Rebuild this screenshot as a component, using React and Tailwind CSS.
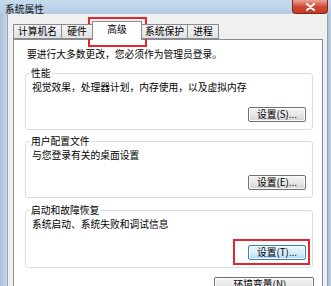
import React from 'react';

const Btn = ({ children, focus, className = '' }) => (
  <div
    className={
      'h-[15px] flex items-center justify-center rounded-[2px] border text-[9.75px] leading-none text-black ' +
      (focus
        ? 'border-[#3c7fb1] bg-linear-to-b from-[#eaf6fd] via-[#d9effc] to-[#a9dbf6] shadow-[inset_0_0_0_1px_#f4fbff] '
        : 'border-[#707070] bg-linear-to-b from-[#f4f4f4] via-[#e8e8e8] to-[#d2d2d2] shadow-[inset_0_0_0_1px_#fcfcfc] ') +
      className
    }
  >
    {children}
  </div>
);

const Group = ({ label, text, button, focus, h = 'h-[57px]', className = '' }) => (
  <div className={'relative ml-[11px] w-[288px] rounded-[3px] border border-[#d5dfe5] flex flex-col ' + h + ' ' + className}>
    <span className="absolute left-[4px] -top-[6px] bg-white px-[1px] leading-[10px]">{label}</span>
    <p className="mt-[8px] ml-[6px] leading-[10px]">{text}</p>
    <Btn focus={focus} className="mt-auto mb-[7px] mr-[6px] self-end w-[58px]">
      {button}
    </Btn>
  </div>
);

const Tab = ({ children, w }) => (
  <div
    className={
      'h-[15px] flex items-center justify-center border border-r-0 border-[#898c95] bg-linear-to-b from-[#f3f3f3] to-[#e2e2e2] leading-none ' +
      w
    }
  >
    {children}
  </div>
);

export default function App() {
  return (
    <div className="relative w-[331px] h-[286px] overflow-hidden flex flex-col bg-[#bcd2e8] font-['Noto_Sans_CJK_SC',sans-serif] text-[9.75px] text-black">
      {/* title bar */}
      <div className="h-[17px] flex items-start justify-between bg-linear-to-b from-[#c7dbee] to-[#b3cbe3]">
        <span className="ml-[5px] mt-[4px] leading-[10px] text-[#111]">系统属性</span>
        <div className="mr-[3px] w-[36px] h-[14px] rounded-b-[4px] border border-t-0 border-[#7b2a1e] bg-linear-to-b from-[#e9a495] via-[#cf4b33] to-[#c23a20] flex items-center justify-center">
          <svg width="9" height="8" viewBox="0 0 9 8">
            <path d="M1 1 L8 7 M8 1 L1 7" stroke="#fff" strokeWidth="2" strokeLinecap="round" />
          </svg>
        </div>
      </div>

      <div className="flex-1 flex">
        <div className="w-[8px] bg-linear-to-r from-[#a9c0d8] to-[#c4d6e8] border-r border-[#8ea3b8]" />
        <div className="flex-1 bg-[#f0f0f0] pl-[5px] pr-[4px] flex flex-col">
          {/* tabs */}
          <div className="h-[25px] flex items-end relative z-10">
            <Tab w="w-[48px]">计算机名</Tab>
            <Tab w="w-[31px]">硬件</Tab>
            <div className="h-[19px] w-[50px] -mb-px border border-b-0 border-[#898c95] bg-white flex items-center justify-center leading-none pb-[2px]">
              高级
            </div>
            <Tab w="w-[45px] border-l-0">系统保护</Tab>
            <div className="h-[15px] w-[32px] flex items-center justify-center border border-[#898c95] bg-linear-to-b from-[#f3f3f3] to-[#e2e2e2] leading-none">
              进程
            </div>
          </div>

          {/* panel */}
          <div className="flex-1 border border-[#898c95] bg-white">
            <p className="mt-[9px] ml-[13px] leading-[10px]">要进行大多数更改，您必须作为管理员登录。</p>
            <Group
              className="mt-[14px]"
              label="性能"
              text="视觉效果，处理器计划，内存使用，以及虚拟内存"
              button="设置(S)..."
            />
            <Group
              className="mt-[11px]"
              label="用户配置文件"
              text="与您登录有关的桌面设置"
              button="设置(E)..."
            />
            <Group
              className="mt-[12px]"
              h="h-[58px]"
              label="启动和故障恢复"
              text="系统启动、系统失败和调试信息"
              button="设置(T)..."
              focus
            />
            <div className="flex justify-end mt-[9px] mr-[8px]">
              <Btn className="w-[100px] h-[16px]">环境变量(N)...</Btn>
            </div>
          </div>
        </div>
        <div className="w-[4px] bg-linear-to-r from-[#a6bdd4] to-[#c4d6e8] border-l border-[#8ea3b8]" />
      </div>

      {/* red highlight marks */}
      <div className="absolute left-[88px] top-[17px] w-[59px] h-[30px] border-2 border-[#e5262c]" />
      <div className="absolute left-[233px] top-[239px] w-[77px] h-[26px] border-2 border-[#e5262c]" />
    </div>
  );
}
